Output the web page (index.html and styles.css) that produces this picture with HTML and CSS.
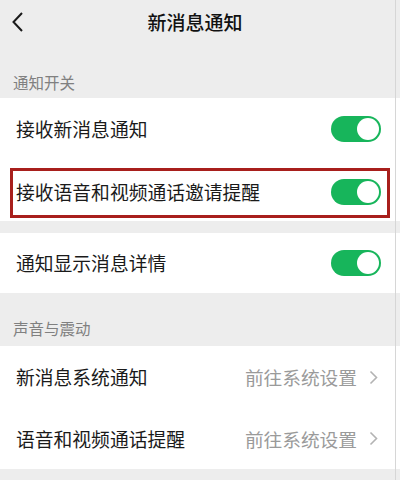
FILE: index.html
```html
<!DOCTYPE html>
<html lang="zh">
<head>
<meta charset="utf-8">
<link rel="stylesheet" href="styles.css">
</head>
<body>
<div class="page">
  <header class="nav">
    <svg class="back" width="14" height="22" viewBox="0 0 14 22"><path d="M11 2 L2.5 11 L11 20" fill="none" stroke="#1a1a1a" stroke-width="2"/></svg>
    <div class="title">新消息通知</div>
  </header>

  <div class="label first">通知开关</div>
  <div class="group">
    <div class="row r62"><span class="text">接收新消息通知</span><span class="toggle"><span class="knob"></span></span></div>
    <div class="row r61 marked"><span class="text">接收语音和视频通话邀请提醒</span><span class="toggle"><span class="knob"></span></span><span class="mark"></span></div>
  </div>
  <div class="gap"></div>
  <div class="group">
    <div class="row r60"><span class="text">通知显示消息详情</span><span class="toggle"><span class="knob"></span></span></div>
  </div>

  <div class="label second">声音与震动</div>
  <div class="group">
    <div class="row r62 link"><span class="text">新消息系统通知</span><span class="value">前往系统设置</span><svg class="chev" width="9" height="15" viewBox="0 0 9 15"><path d="M1.5 1.5 L7.5 7.5 L1.5 13.5" fill="none" stroke="#b3b3b3" stroke-width="1.6"/></svg></div>
    <div class="row r61 link"><span class="text">语音和视频通话提醒</span><span class="value">前往系统设置</span><svg class="chev" width="9" height="15" viewBox="0 0 9 15"><path d="M1.5 1.5 L7.5 7.5 L1.5 13.5" fill="none" stroke="#b3b3b3" stroke-width="1.6"/></svg></div>
  </div>
  <div class="edge"></div>
</div>
</body>
</html>
```

FILE: styles.css
```css
* { box-sizing: border-box; }
html, body { margin: 0; padding: 0; }
body {
  background: #ededed;
  font-family: "Noto Sans CJK SC", "Noto Sans", sans-serif;
  color: #1a1a1a;
}
.page {
  position: relative;
  width: 400px;
  height: 480px;
  overflow: hidden;
  background: #ededed;
}
.nav {
  position: relative;
  height: 44px;
  display: flex;
  align-items: center;
  justify-content: center;
  padding-right: 10px;
}
.back {
  position: absolute;
  left: 11px;
  top: 11px;
}
.title {
  font-size: 19px;
  font-weight: 500;
  line-height: 24px;
  color: #111;
}
.label {
  display: flex;
  align-items: flex-end;
  padding-left: 13px;
  font-size: 15.5px;
  line-height: 20px;
  color: #808080;
}
.label.first { height: 54px; padding-bottom: 6px; }
.label.second { height: 53px; padding-bottom: 8px; }
.group { background: #fff; }
.gap { height: 12px; }
.row {
  position: relative;
  display: flex;
  align-items: center;
  padding: 0 19px 0 16px;
}
.r62 { height: 62px; }
.r61 { height: 61px; }
.r60 { height: 60px; }
.marked { padding-top: 3px; }
.text {
  flex: 1;
  font-size: 18.8px;
  line-height: 24px;
  color: #1a1a1a;
}
.toggle {
  position: relative;
  width: 50px;
  height: 26px;
  border-radius: 13px;
  background: #17b55b;
  display: flex;
  align-items: center;
  justify-content: flex-end;
  padding-right: 2px;
}
.knob {
  width: 22px;
  height: 22px;
  border-radius: 50%;
  background: #fff;
}
.mark {
  position: absolute;
  left: 10px;
  top: 8px;
  width: 380px;
  height: 50px;
  border: 3px solid #a81f1c;
}
.link { padding-right: 22px; }
.value {
  font-size: 18.7px;
  line-height: 24px;
  color: #9a9a9a;
  margin-right: 12px;
}
.chev { display: block; }
.edge {
  position: absolute;
  left: 395px;
  top: 0;
  width: 1px;
  height: 480px;
  background: #d6d6d6;
}
```
